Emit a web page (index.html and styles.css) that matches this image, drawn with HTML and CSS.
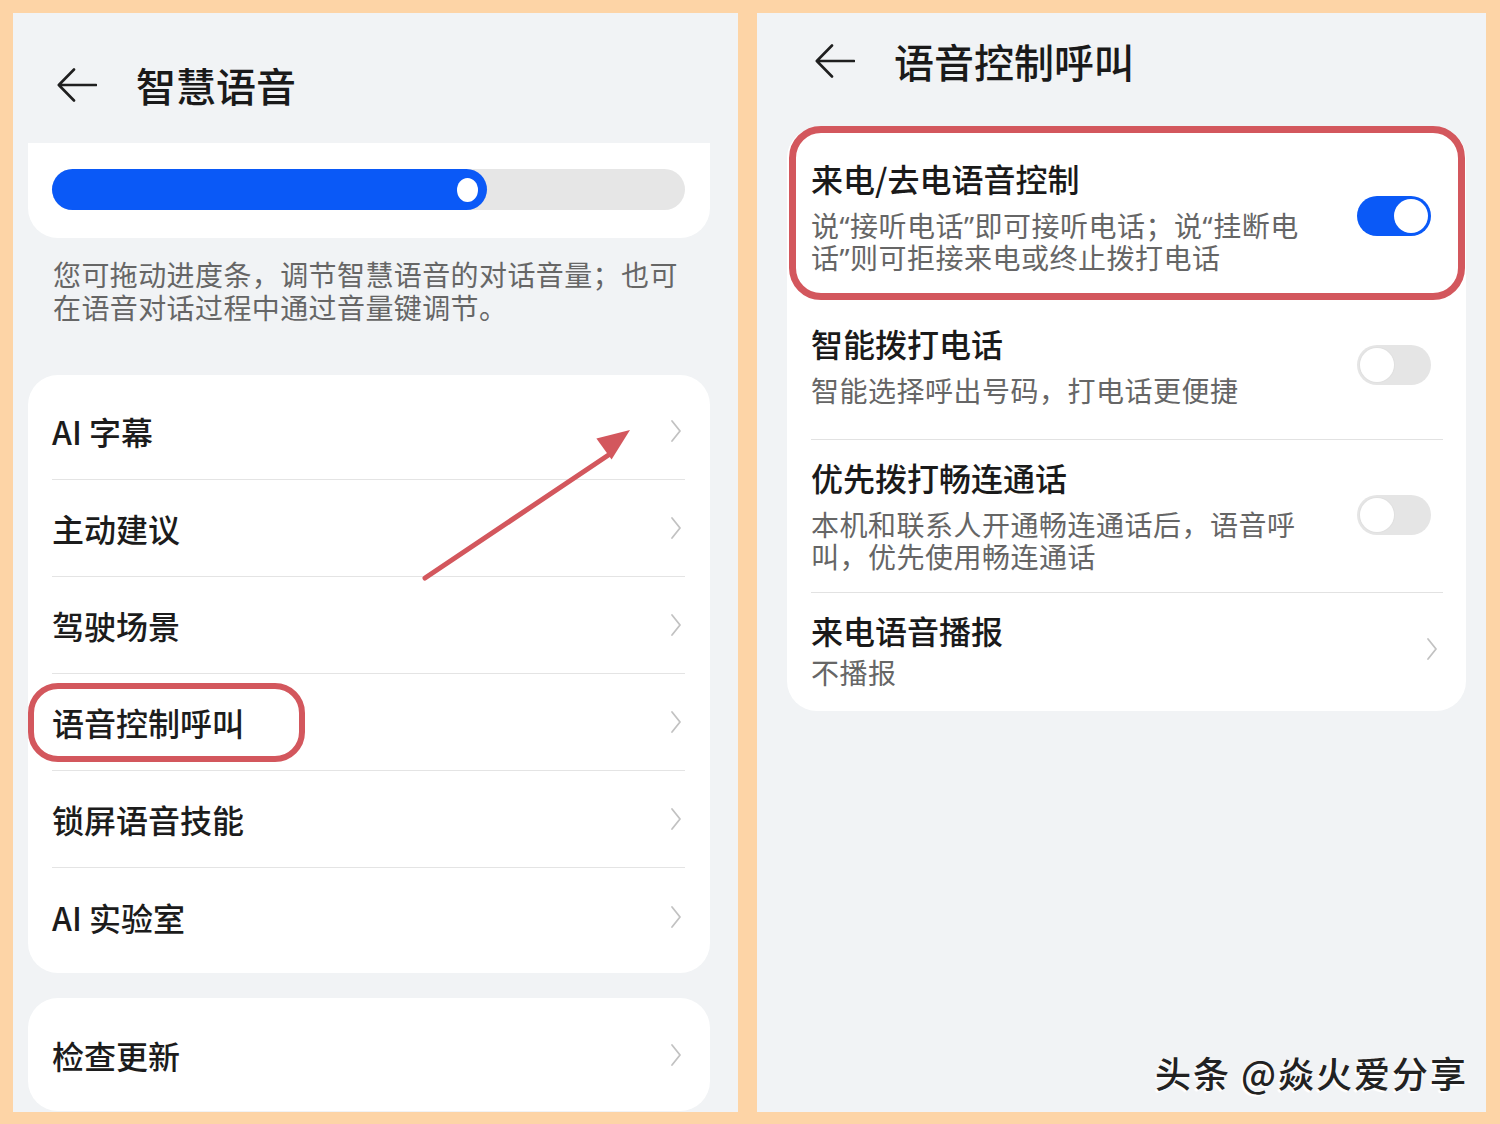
FILE: index.html
```html
<!DOCTYPE html>
<html lang="zh-CN">

<head>
  <meta charset="UTF-8">
  <meta name="viewport" content="width=device-width, initial-scale=1.0">
  <title>智慧语音 · 语音控制呼叫</title>
  <link rel="stylesheet" href="styles.css">
</head>

<body>
  <main class="frame">

    <!-- left screen -->
    <section class="phone phone-left">
      <header class="bar">
        <svg class="back" viewBox="0 0 40 34" aria-hidden="true">
          <path d="M39 17H2M17 1.5L1.8 17L17 32.5" />
        </svg>
        <h1>智慧语音</h1>
      </header>

      <div class="card card-slider">
        <div class="track">
          <div class="fill"><span class="knob"></span></div>
        </div>
      </div>

      <p class="hint">您可拖动进度条，调节智慧语音的对话音量；也可在语音对话过程中通过音量键调节。</p>

      <ul class="card list">
        <li class="item"><span>AI 字幕</span><svg class="chev" viewBox="0 0 12 24"><path d="M2 2l8 10-8 10" /></svg></li>
        <li class="item"><span>主动建议</span><svg class="chev" viewBox="0 0 12 24"><path d="M2 2l8 10-8 10" /></svg></li>
        <li class="item"><span>驾驶场景</span><svg class="chev" viewBox="0 0 12 24"><path d="M2 2l8 10-8 10" /></svg></li>
        <li class="item"><span>语音控制呼叫</span><svg class="chev" viewBox="0 0 12 24"><path d="M2 2l8 10-8 10" /></svg></li>
        <li class="item"><span>锁屏语音技能</span><svg class="chev" viewBox="0 0 12 24"><path d="M2 2l8 10-8 10" /></svg></li>
        <li class="item"><span>AI 实验室</span><svg class="chev" viewBox="0 0 12 24"><path d="M2 2l8 10-8 10" /></svg></li>
        <li class="mark mark-call" aria-hidden="true"></li>
      </ul>

      <ul class="card list list-update">
        <li class="item"><span>检查更新</span><svg class="chev" viewBox="0 0 12 24"><path d="M2 2l8 10-8 10" /></svg></li>
      </ul>

      <svg class="pointer" viewBox="0 0 725 1099" aria-hidden="true">
        <line x1="412" y1="565" x2="597" y2="441" />
        <polygon points="617,417 583.4,425.5 598.6,446.5" />
      </svg>
    </section>

    <!-- right screen -->
    <section class="phone phone-right">
      <header class="bar bar-right">
        <svg class="back" viewBox="0 0 40 34" aria-hidden="true">
          <path d="M39 17H2M17 1.5L1.8 17L17 32.5" />
        </svg>
        <h1>语音控制呼叫</h1>
      </header>

      <div class="card opts">
        <div class="opt opt-loose">
          <div class="opt-text">
            <h2>来电/去电语音控制</h2>
            <p>说“接听电话”即可接听电话；说“挂断电话”则可拒接来电或终止拨打电话</p>
          </div>
          <span class="switch on"></span>
        </div>
        <div class="opt opt-loose">
          <div class="opt-text">
            <h2>智能拨打电话</h2>
            <p>智能选择呼出号码，打电话更便捷</p>
          </div>
          <span class="switch"></span>
        </div>
        <div class="opt opt-ruled">
          <div class="opt-text">
            <h2>优先拨打畅连通话</h2>
            <p>本机和联系人开通畅连通话后，语音呼叫，优先使用畅连通话</p>
          </div>
          <span class="switch"></span>
        </div>
        <div class="opt opt-ruled opt-last">
          <div class="opt-text">
            <h2>来电语音播报</h2>
            <p>不播报</p>
          </div>
          <svg class="chev chev-opt" viewBox="0 0 12 24"><path d="M2 2l8 10-8 10" /></svg>
        </div>
        <span class="mark mark-toggle" aria-hidden="true"></span>
      </div>

      <p class="stamp">头条 @焱火爱分享</p>
    </section>

  </main>
</body>

</html>
```

FILE: styles.css
```css
html {
  box-sizing: border-box;
  font-family: "Noto Sans CJK SC", "Noto Sans", sans-serif;
  font-size: 16px;
}

*,
*::after,
*::before {
  box-sizing: inherit;
}

body {
  margin: 0;
  background-color: #fdd4a6;
}

h1,
h2,
p,
ul {
  margin: 0;
  padding: 0;
}

.frame {
  display: flex;
  gap: 19px;
  padding: 13px 14px 12px 13px;
  height: 1124px;
}

.phone {
  position: relative;
  height: 1099px;
  overflow: hidden;
  background-color: #f1f3f5;
}

.phone-left {
  width: 725px;
}

.phone-right {
  width: 729px;
}

/* header */

.bar {
  display: flex;
  align-items: center;
  gap: 39px;
  height: 130px;
  padding: 14px 0 0 44px;
}

.bar-right {
  height: 115px;
  padding: 0 0 19px 58px;
}

.bar h1 {
  font-size: 40px;
  font-weight: 500;
  color: #1a1a1a;
}

.back {
  width: 40px;
  height: 34px;
  fill: none;
  stroke: #1f1f1f;
  stroke-width: 2.6;
  stroke-linecap: round;
  stroke-linejoin: round;
}

/* cards */

.card {
  position: relative;
  margin: 0 28px 0 15px;
  background-color: #fff;
  border-radius: 30px;
  list-style: none;
}

.card-slider {
  height: 95px;
  padding: 26px 25px 0 24px;
  border-radius: 0 0 30px 30px;
}

.track {
  height: 41px;
  border-radius: 21px;
  background-color: #e6e6e6;
}

.fill {
  position: relative;
  width: 68.7%;
  height: 100%;
  border-radius: 21px;
  background-color: #0a59f7;
}

.knob {
  position: absolute;
  top: 9px;
  right: 9px;
  width: 21px;
  height: 24px;
  border-radius: 50%;
  background-color: #fff;
}

.hint {
  margin: 20px 53px 51px 40px;
  font-size: 28px;
  line-height: 33px;
  letter-spacing: .4px;
  color: #666;
}

.list {
  padding: 8px 0;
}

.list-update {
  margin-top: 25px;
}

.item {
  display: flex;
  align-items: center;
  justify-content: space-between;
  height: 97px;
  margin: 0 25px 0 24px;
  border-bottom: 1px solid #e4e4e4;
  font-size: 32px;
  font-weight: 500;
  color: #1c1c1c;
}

.item:nth-last-child(2),
.list-update .item {
  border-bottom: 0;
}

.chev {
  width: 12px;
  height: 24px;
  margin-right: 3px;
  fill: none;
  stroke: #c2c2c2;
  stroke-width: 1.8;
  stroke-linecap: round;
  stroke-linejoin: round;
}

/* annotations */

.mark {
  position: absolute;
  border: 6px solid #d3575d;
  border-radius: 30px;
  pointer-events: none;
}

.mark-call {
  top: 308px;
  left: 0;
  width: 277px;
  height: 79px;
}

.mark-toggle {
  top: -2px;
  left: 2px;
  width: 676px;
  height: 174px;
  border-width: 7px;
  border-radius: 32px;
}

.pointer {
  position: absolute;
  top: 0;
  left: 0;
  width: 725px;
  height: 1099px;
  pointer-events: none;
}

.pointer line {
  stroke: #d3575d;
  stroke-width: 5;
  stroke-linecap: round;
}

.pointer polygon {
  fill: #d3575d;
}

/* right screen options */

.opts {
  margin: 0 20px 0 30px;
  padding: 13px 0 4px;
}

.opt {
  display: flex;
  align-items: center;
  justify-content: space-between;
  margin: 0 23px 0 24px;
  padding: 16px 0 19px;
}

.opt-loose {
  padding-bottom: 32px;
}

.opt-ruled {
  border-top: 1px solid #e2e2e2;
}

.opt-last {
  padding-bottom: 18px;
}

.opt-text {
  max-width: 505px;
}

.opt-text h2 {
  font-size: 32px;
  line-height: 42px;
  font-weight: 500;
  color: #1a1a1a;
}

/* latin quotes come from Noto Sans, so they stay narrow */
.opt-text p {
  margin-top: 11px;
  font-family: "Noto Sans", "Noto Sans CJK SC", sans-serif;
  font-size: 28px;
  line-height: 32px;
  letter-spacing: .5px;
  color: #666;
}

.opt-last p {
  margin-top: 6px;
}

.switch {
  position: relative;
  flex: none;
  width: 74px;
  height: 40px;
  margin-right: 12px;
  border-radius: 20px;
  background-color: #e5e5e5;
}

.switch::after {
  content: "";
  position: absolute;
  top: 3px;
  left: 3px;
  width: 34px;
  height: 34px;
  border-radius: 50%;
  background-color: #fff;
  box-shadow: 0 0 0 1px #e0e0e0;
}

.switch.on {
  background-color: #0a59f7;
}

.switch.on::after {
  left: 37px;
  box-shadow: none;
}

.chev-opt {
  margin-right: 5px;
}

.stamp {
  position: absolute;
  right: 18px;
  bottom: 14px;
  font-size: 36px;
  font-weight: 500;
  letter-spacing: 2px;
  color: #222;
  text-shadow: -2px 2px 1px #fff;
}
```
